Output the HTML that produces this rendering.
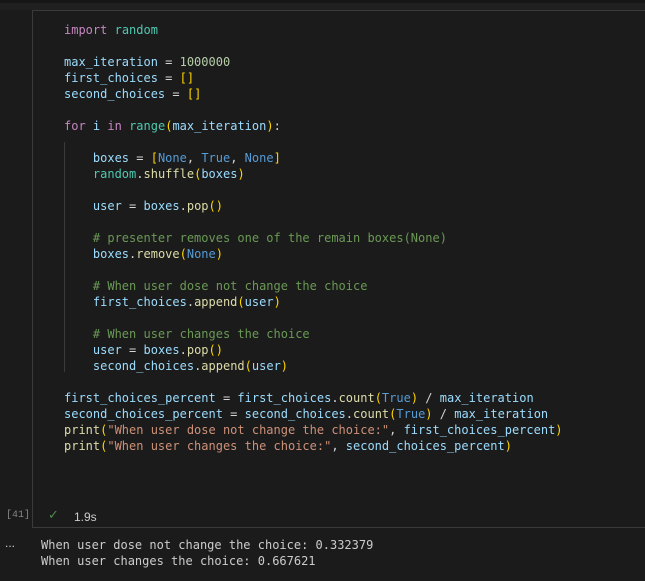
<!DOCTYPE html>
<html><head><style>
html,body{margin:0;padding:0;background:#1b1b1b;width:645px;height:581px;overflow:hidden;position:relative}
.top{position:absolute;left:0;top:0;width:645px;height:3px;background:#161616}
.bar{position:absolute;left:0;top:3px;width:645px;height:7px;background:#202020}
.cell{position:absolute;left:32px;top:10px;width:620px;height:516px;border:1px solid #3a3a3a;border-right:none;background:#1b1b1b}
pre{margin:0;font-family:"DejaVu Sans Mono","Liberation Mono",monospace;font-size:12px;line-height:16px;color:#d4d4d4}
.code{position:absolute;left:64px;top:22px}
.guide{position:absolute;left:64px;top:142px;width:1px;height:230px;background:#3a3a3a}
.k{color:#c586c0}.m{color:#4ec9b0}.v{color:#9cdcfe}.n{color:#b5cea8}.b{color:#ffd700}.c{color:#569cd6}.f{color:#dcdcaa}.g{color:#6a9955}.s{color:#ce9178}
.num{position:absolute;left:6px;top:510px;font-family:"Liberation Mono",monospace;font-size:10px;color:#858585}
.chk{position:absolute;left:48px;top:508px;color:#4d8a4d;font-family:"DejaVu Sans",sans-serif;font-size:13px}
.time{position:absolute;left:74px;top:510px;color:#cccccc;font-family:"Liberation Sans",sans-serif;font-size:12px}
.dots{position:absolute;left:5px;top:536px;color:#cccccc;font-family:"Liberation Sans",sans-serif;font-size:12px}
.out{position:absolute;left:41px;top:537px;color:#cccccc}
</style></head><body>
<div class="top"></div><div class="bar"></div>
<div class="cell"></div>
<div class="guide"></div>
<pre class="code"><span class="k">import</span> <span class="m">random</span>

<span class="v">max_iteration</span> = <span class="n">1000000</span>
<span class="v">first_choices</span> = <span class="b">[]</span>
<span class="v">second_choices</span> = <span class="b">[]</span>

<span class="k">for</span> <span class="v">i</span> <span class="k">in</span> <span class="m">range</span><span class="b">(</span><span class="v">max_iteration</span><span class="b">)</span>:

    <span class="v">boxes</span> = <span class="b">[</span><span class="c">None</span>, <span class="c">True</span>, <span class="c">None</span><span class="b">]</span>
    <span class="m">random</span>.<span class="f">shuffle</span><span class="b">(</span><span class="v">boxes</span><span class="b">)</span>

    <span class="v">user</span> = <span class="v">boxes</span>.<span class="f">pop</span><span class="b">()</span>

    <span class="g"># presenter removes one of the remain boxes(None)</span>
    <span class="v">boxes</span>.<span class="f">remove</span><span class="b">(</span><span class="c">None</span><span class="b">)</span>

    <span class="g"># When user dose not change the choice</span>
    <span class="v">first_choices</span>.<span class="f">append</span><span class="b">(</span><span class="v">user</span><span class="b">)</span>

    <span class="g"># When user changes the choice</span>
    <span class="v">user</span> = <span class="v">boxes</span>.<span class="f">pop</span><span class="b">()</span>
    <span class="v">second_choices</span>.<span class="f">append</span><span class="b">(</span><span class="v">user</span><span class="b">)</span>

<span class="v">first_choices_percent</span> = <span class="v">first_choices</span>.<span class="f">count</span><span class="b">(</span><span class="c">True</span><span class="b">)</span> / <span class="v">max_iteration</span>
<span class="v">second_choices_percent</span> = <span class="v">second_choices</span>.<span class="f">count</span><span class="b">(</span><span class="c">True</span><span class="b">)</span> / <span class="v">max_iteration</span>
<span class="f">print</span><span class="b">(</span><span class="s">"When user dose not change the choice:"</span>, <span class="v">first_choices_percent</span><span class="b">)</span>
<span class="f">print</span><span class="b">(</span><span class="s">"When user changes the choice:"</span>, <span class="v">second_choices_percent</span><span class="b">)</span></pre>
<div class="num">[41]</div>
<div class="chk">✓</div>
<div class="time">1.9s</div>
<div class="dots">...</div>
<pre class="out">When user dose not change the choice: 0.332379
When user changes the choice: 0.667621</pre>
</body></html>
